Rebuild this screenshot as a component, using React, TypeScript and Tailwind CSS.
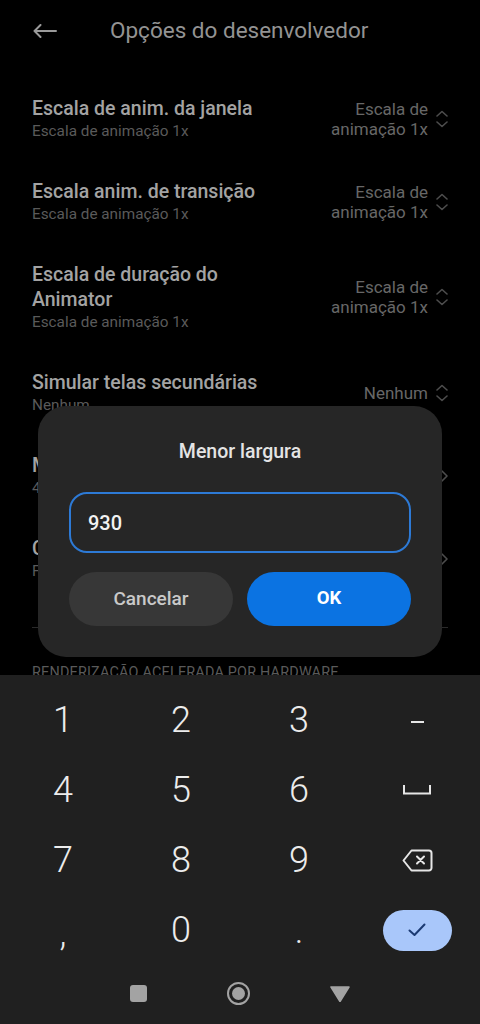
import type { ReactNode } from 'react'

const FONT = { fontFamily: 'Roboto, "Noto Sans", "Liberation Sans", sans-serif' }

type Linha = {
  titulo: ReactNode
  sub: string
  valor?: ReactNode
  tipo: 'select' | 'link'
}

const LINHAS: Linha[] = [
  { titulo: 'Escala de anim. da janela', sub: 'Escala de animação 1x', valor: 'Escala de animação 1x', tipo: 'select' },
  { titulo: 'Escala anim. de transição', sub: 'Escala de animação 1x', valor: 'Escala de animação 1x', tipo: 'select' },
  {
    titulo: (
      <>
        Escala de duração do
        <br />
        Animator
      </>
    ),
    sub: 'Escala de animação 1x',
    valor: 'Escala de animação 1x',
    tipo: 'select',
  },
  { titulo: 'Simular telas secundárias', sub: 'Nenhum', valor: 'Nenhum', tipo: 'select' },
  { titulo: 'Menor largura', sub: '440 dp', tipo: 'link' },
  { titulo: 'Corte de exibição', sub: 'Formato padrão', tipo: 'link' },
]

function SobeDesce() {
  return (
    <svg width="12" height="18" viewBox="0 0 12 18" fill="none" stroke="#4d4d4d" strokeWidth="1.6" strokeLinecap="round" strokeLinejoin="round">
      <path d="M1 6 L6 1.5 L11 6" />
      <path d="M1 12 L6 16.5 L11 12" />
    </svg>
  )
}

function Seta() {
  return (
    <svg width="7" height="12" viewBox="0 0 7 12" fill="none" stroke="#4d4d4d" strokeWidth="1.6" strokeLinecap="round" strokeLinejoin="round">
      <path d="M1 1 L6 6 L1 11" />
    </svg>
  )
}

function LinhaConfig({ linha }: { linha: Linha }) {
  return (
    <div className="flex items-center py-[18.5px]">
      <div className="flex-1 min-w-0">
        <div className="text-[19.5px] leading-[25px] font-medium text-[#a3a3a3]">{linha.titulo}</div>
        <div className="text-[15.3px] leading-[21px] text-[#5a5a5a]">{linha.sub}</div>
      </div>
      {linha.valor && (
        <div className="w-[112px] text-right text-[17px] leading-[20px] text-[#676767]">{linha.valor}</div>
      )}
      <div className="w-[20px] flex justify-end">
        {linha.tipo === 'select' ? <SobeDesce /> : <Seta />}
      </div>
    </div>
  )
}

function Dialogo() {
  return (
    <div className="absolute top-[406px] left-[38px] w-[404px] rounded-[28px] bg-[#262626] px-[31px] pt-[34px] pb-[31px]">
      <div className="text-center text-[19.5px] leading-[24px] font-medium text-[#e4e4e4]">Menor largura</div>
      <div className="mt-[28px] h-[61px] rounded-[18px] border-2 border-[#2d7ad6] flex items-center px-[17px]">
        <span className="text-[20px] font-medium text-[#f2f2f2]">930</span>
      </div>
      <div className="mt-[19px] grid grid-cols-2 gap-[14px]">
        <button className="h-[54px] rounded-full bg-[#373737] text-[19px] font-medium text-[#c9c9c9]">Cancelar</button>
        <button className="h-[54px] rounded-full bg-[#0b73e2] text-[18.5px] font-bold text-white">OK</button>
      </div>
    </div>
  )
}

function Tecla({ children }: { children: ReactNode }) {
  return <div className="h-[70px] flex items-center justify-center">{children}</div>
}

function Digito({ d }: { d: string }) {
  return (
    <Tecla>
      <span className="text-[36px] font-light leading-none text-[#ececec]">{d}</span>
    </Tecla>
  )
}

function Teclado() {
  return (
    <div className="bg-[#202020] h-[349px] flex flex-col">
      <div className="pt-[10px] px-1 grid grid-cols-4">
        <Digito d="1" />
        <Digito d="2" />
        <Digito d="3" />
        <Tecla>
          <div className="w-[13px] h-[2px] bg-[#e6e6e6] mt-[4px]" />
        </Tecla>

        <Digito d="4" />
        <Digito d="5" />
        <Digito d="6" />
        <Tecla>
          <svg width="28" height="10" viewBox="0 0 28 10" fill="none" stroke="#e6e6e6" strokeWidth="2">
            <path d="M1 0 V8.5 H27 V0" />
          </svg>
        </Tecla>

        <Digito d="7" />
        <Digito d="8" />
        <Digito d="9" />
        <Tecla>
          <svg width="31" height="23" viewBox="0 0 31 23" fill="none" stroke="#e6e6e6" strokeWidth="2" strokeLinejoin="round" strokeLinecap="round">
            <path d="M9.5 1.5 H27 a2.5 2.5 0 0 1 2.5 2.5 V19 a2.5 2.5 0 0 1 -2.5 2.5 H9.5 L1.5 11.5 Z" />
            <path d="M15 7.5 L22 14.5 M22 7.5 L15 14.5" />
          </svg>
        </Tecla>

        <Tecla>
          <span className="text-[36px] font-light leading-none text-[#ececec] mt-[6px]">,</span>
        </Tecla>
        <Digito d="0" />
        <Tecla>
          <span className="text-[36px] font-light leading-none text-[#ececec] mt-[2px]">.</span>
        </Tecla>
        <Tecla>
          <div className="w-[69px] h-[41px] rounded-full bg-[#a9c7fa] flex items-center justify-center">
            <svg width="18" height="14" viewBox="0 0 18 14" fill="none" stroke="#1b3a72" strokeWidth="2" strokeLinecap="round" strokeLinejoin="round">
              <path d="M1.5 7.5 L6.5 12 L16.5 1.5" />
            </svg>
          </div>
        </Tecla>
      </div>

      <div className="flex-1 flex items-center justify-center gap-[80px] pb-[2px]">
        <div className="w-[17px] h-[17px] rounded-[3px] bg-[#a3a3a3]" />
        <div className="w-[23px] h-[23px] rounded-full border-2 border-[#a3a3a3] flex items-center justify-center">
          <div className="w-[13px] h-[13px] rounded-full bg-[#a3a3a3]" />
        </div>
        <svg width="20" height="16" viewBox="0 0 20 16">
          <path d="M1 1 H19 L10 15.5 Z" fill="#a3a3a3" stroke="#a3a3a3" strokeWidth="1.5" strokeLinejoin="round" />
        </svg>
      </div>
    </div>
  )
}

export default function App() {
  return (
    <div className="w-[480px] h-[1024px] bg-black flex flex-col overflow-hidden" style={FONT}>
      <div className="flex-1 relative overflow-hidden">
        <header className="h-[62px] flex items-center px-[33px]">
          <svg width="24" height="14" viewBox="0 0 24 14" fill="none" stroke="#9a9a9a" strokeWidth="2" strokeLinecap="round" strokeLinejoin="round">
            <path d="M23 7 H1.5 M7.5 1 L1.5 7 L7.5 13" />
          </svg>
          <h1 className="ml-[53px] text-[22.5px] text-[#939393]">Opções do desenvolvedor</h1>
        </header>

        <div className="px-8 pt-[15px]">
          {LINHAS.map((l, i) => (
            <LinhaConfig key={i} linha={l} />
          ))}
          <div className="mt-[27px] h-px bg-[#2a2a2a]" />
          <div className="mt-[35px] text-[14.4px] leading-[20px] tracking-[0.2px] text-[#5a5a5a]">
            RENDERIZAÇÃO ACELERADA POR HARDWARE
          </div>
        </div>

        <Dialogo />
      </div>

      <Teclado />
    </div>
  )
}
